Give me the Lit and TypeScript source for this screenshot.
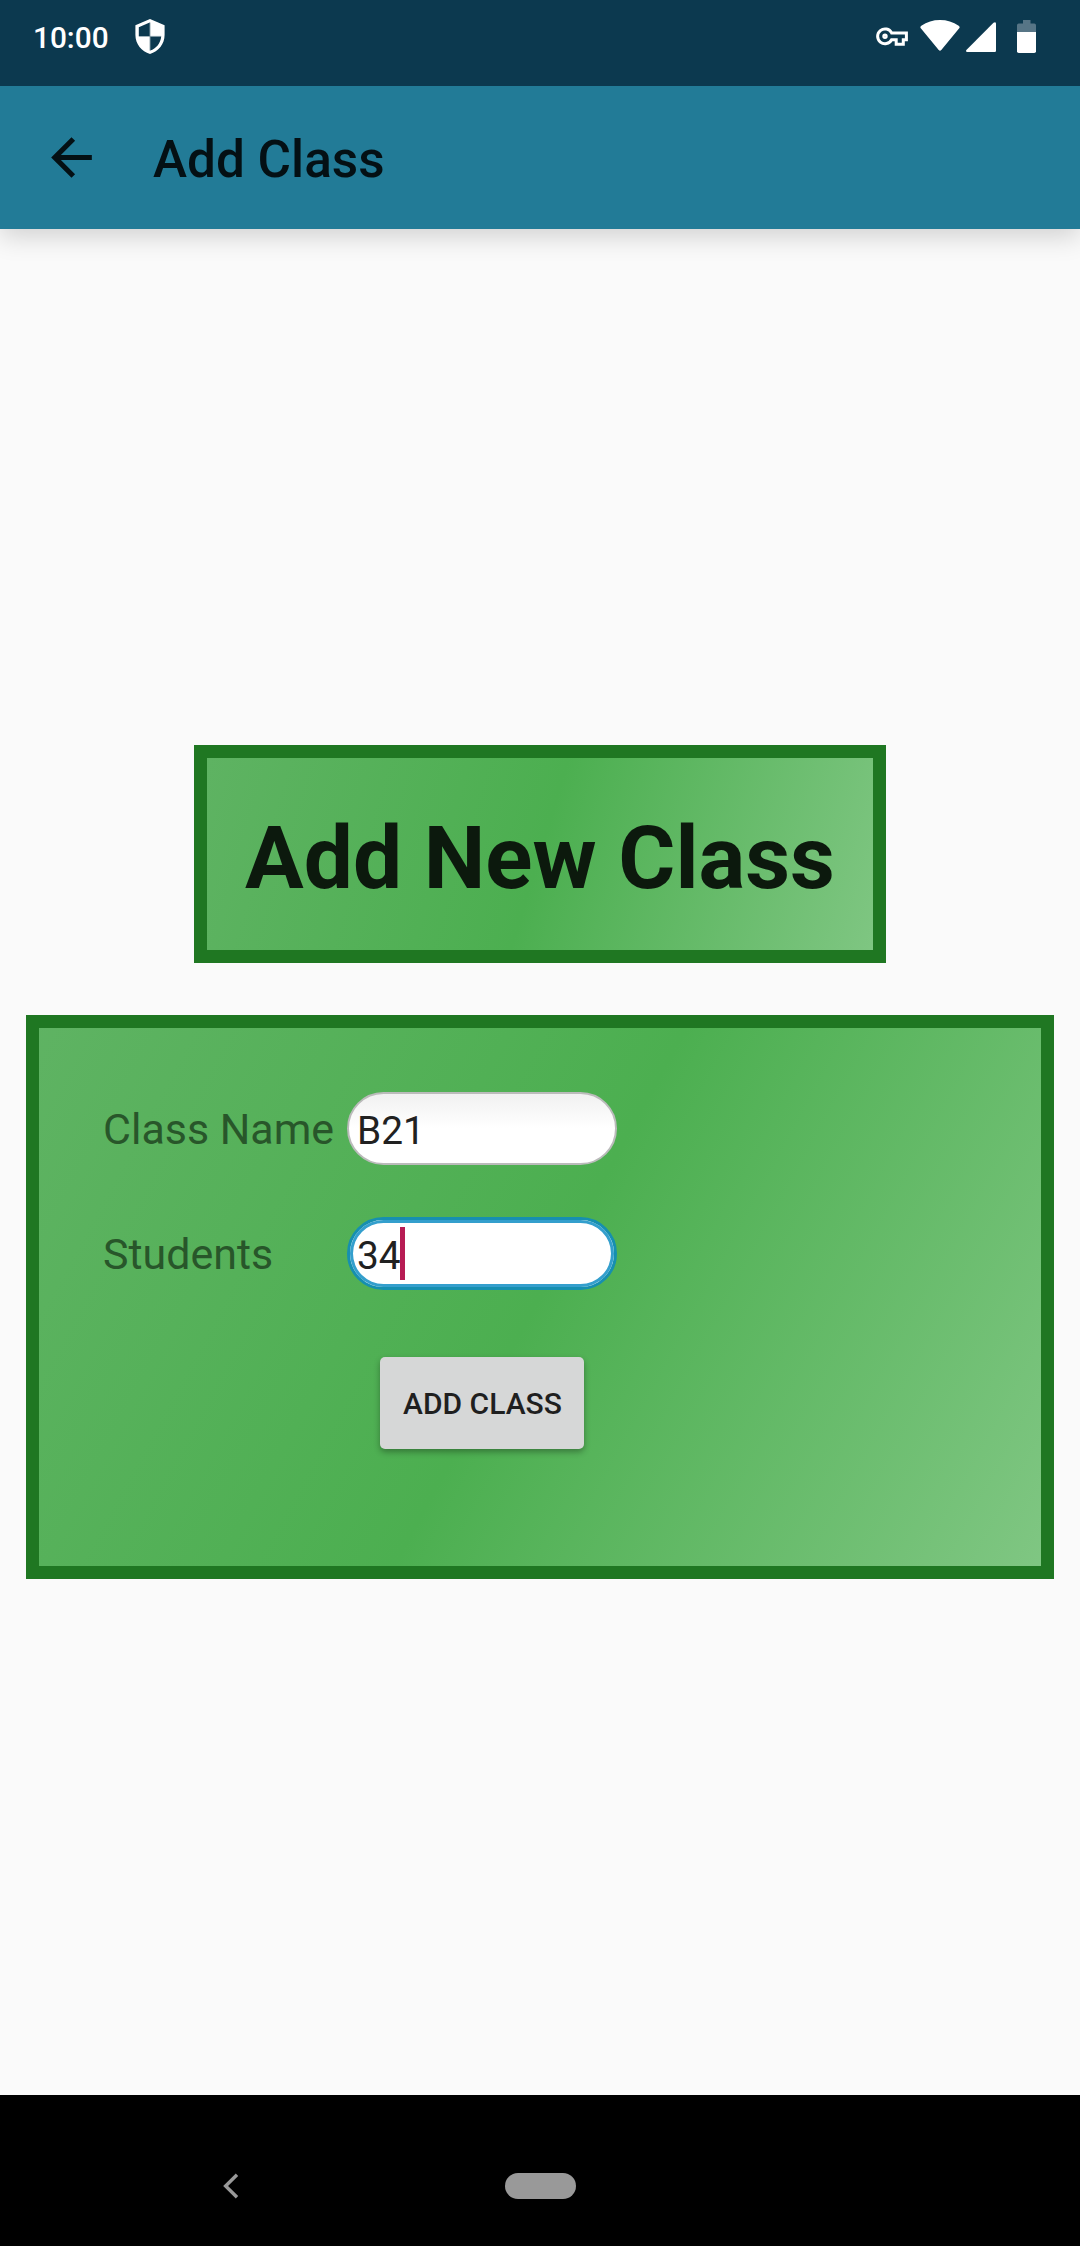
import { LitElement, html, css } from "lit";
import { customElement, property } from "lit/decorators.js";

@customElement("status-bar")
class StatusBar extends LitElement {
  static styles = css`
    :host {
      display: flex;
      height: 86px;
      box-sizing: border-box;
      padding: 19px 44px 0 33px;
      background: #0c394f;
      color: #fff;
      align-items: flex-start;
    }
    svg { display: block; flex: none; }
    .time {
      width: 102px;
      padding-top: 1px;
      font: 500 29.8px/36px Roboto, sans-serif;
      white-space: nowrap;
    }
    .spacer { flex: 1; }
    .key { margin: 8px 12px 0 0; }
    .wifi { margin: 1px 6px 0 0; }
    .signal { margin: 3px 21px 0 0; }
    .battery { margin-top: 1px; }
  `;
  render() {
    return html`
      <span class="time">10:00</span>
      <svg width="30" height="35" viewBox="0 0 30 35">
        <path fill="#fff" fill-rule="evenodd"
          d="M15 0L.4 6.2V16C.4 25 6.6 32.6 15 35c8.400-2.400 14.600-10 14.600-19V6.200zM14.700 3.500V17H3.800V8.200zM15.300 17.700H26.200C25.600 24 21 29.800 15.300 31.600z" />
        <path stroke="#0c394f" stroke-width=".7" opacity=".6" d="M15 3.500V31.600M3.800 17.400H26.200" />
      </svg>
      <span class="spacer"></span>
      <svg class="key" width="32" height="19" viewBox="0 0 32 19">
        <g fill="none" stroke="#fff" stroke-width="3">
          <path d="M15.600 5.900H30.400V12.700H27.300V17.200H20.200V12.700H15.600A7.400 7.400 0 1 1 15.600 5.900z" />
          <circle cx="9" cy="9.300" r="1.200" />
        </g>
      </svg>
      <svg class="wifi" width="40" height="31" viewBox="0 0 40 31">
        <path fill="#fff" d="M1 8.600Q-.4 7 1.300 5.800Q9.600 0 20 0T38.700 5.800Q40.400 7 39 8.600L21.300 30Q20 31.600 18.700 30z" />
      </svg>
      <svg class="signal" width="30" height="30" viewBox="0 0 30 30">
        <path fill="#fff" d="M30 1.300V28.800Q30 30 28.800 30H1.200Q-.6 29.600.4 28L27.500.8Q29.500-.7 30 1.300z" />
      </svg>
      <svg class="battery" width="19" height="33" viewBox="0 0 19 33">
        <path fill="#577586" d="M6 0H13.500V3.400H17.200Q19 3.400 19 5.200V12H0V5.200Q0 3.400 1.800 3.400H6z" />
        <path fill="#fff" d="M0 12H19V31.200Q19 33 17.200 33H1.800Q0 33 0 31.200z" />
      </svg>
    `;
  }
}

@customElement("app-bar")
class AppBar extends LitElement {
  @property() heading = "";
  static styles = css`
    :host {
      display: flex;
      align-items: center;
      height: 143px;
      box-sizing: border-box;
      padding-left: 41px;
      gap: 51px;
      background: #227b97;
      color: #041014;
      box-shadow: 0 8px 24px rgba(0, 0, 0, 0.16);
      clip-path: inset(0 0 -60px 0);
      z-index: 1;
    }
    svg { display: block; }
    .title { font: 500 51.3px/61px Roboto, sans-serif; padding-top: 4px; }
  `;
  render() {
    return html`
      <svg width="61" height="61" viewBox="0 0 24 24">
        <path fill="currentColor" d="M20 11H7.830l5.590-5.590L12 4l-8 8 8 8 1.410-1.410L7.830 13H20v-2z" />
      </svg>
      <span class="title">${this.heading}</span>
    `;
  }
}

@customElement("text-field")
class TextField extends LitElement {
  @property() label = "";
  @property() value = "";
  @property({ type: Boolean, reflect: true }) active = false;
  static styles = css`
    :host { display: flex; align-items: center; height: 73px; }
    .label {
      width: 244px;
      font: 400 42.950px/50px Roboto, sans-serif;
      color: #28562a;
      white-space: nowrap;
    }
    .box {
      display: flex;
      align-items: center;
      width: 270px;
      height: 73px;
      box-sizing: border-box;
      border: 2px solid #bbb;
      border-radius: 36.5px;
      padding-left: 8px;
      background: linear-gradient(#f1f1f1, #fff 50%);
      font: 400 38.800px/46px Roboto, sans-serif;
      color: #212121;
    }
    :host([active]) .box {
      border: 3px solid #168fb0;
      box-shadow: inset 0 0 0 3px #349fcd;
      padding-left: 7px;
      background: #fff;
    }
    .text { padding-top: 4px; }
    .caret { width: 5px; height: 53px; margin-left: -1px; background: #b71c54; }
  `;
  render() {
    return html`
      <span class="label">${this.label}</span>
      <div class="box">
        <span class="text">${this.value}</span>
        ${this.active ? html`<span class="caret"></span>` : null}
      </div>
    `;
  }
}

@customElement("app-root")
class AppRoot extends LitElement {
  static styles = css`
    :host {
      display: flex;
      flex-direction: column;
      height: 2246px;
      background: #fafafa;
      font-family: Roboto, sans-serif;
    }
    .content {
      flex: 1;
      display: flex;
      flex-direction: column;
      align-items: center;
      justify-content: center;
      gap: 52px;
    }
    .card {
      box-sizing: border-box;
      border: 13px solid #1f7722;
      background: linear-gradient(var(--angle), #5fb363, #4caf50 50%, #81c784) border-box;
    }
    .banner {
      --angle: 106.8deg;
      display: flex;
      align-items: center;
      justify-content: center;
      width: 692px;
      height: 218px;
      font: 700 87.300px/103px Roboto, sans-serif;
      color: #0c190d;
      white-space: nowrap;
      padding-top: 9px;
    }
    .form {
      --angle: 118.5deg;
      display: flex;
      flex-direction: column;
      width: 1028px;
      height: 564px;
      padding: 64px;
      gap: 52px;
    }
    .submit {
      width: 204px;
      height: 92px;
      margin: 15px 0 0 277px;
      padding: 2px 0 0 1px;
      border: 0;
      border-radius: 5px;
      background: #d6d7d7;
      box-shadow: 0 3px 6px rgba(0, 0, 0, 0.32);
      font: 500 30px/36px Roboto, sans-serif;
      color: #1f1f1f;
      white-space: nowrap;
    }
    .nav {
      display: flex;
      align-items: center;
      height: 151px;
      box-sizing: border-box;
      padding: 30px 0 0 223px;
      gap: 266px;
      background: #000;
    }
    .nav svg { display: block; }
    .pill { width: 71px; height: 26px; border-radius: 13px; background: #999; }
  `;
  render() {
    return html`
      <status-bar></status-bar>
      <app-bar heading="Add Class"></app-bar>
      <main class="content">
        <div class="card banner">Add New Class</div>
        <section class="card form">
          <text-field label="Class Name" value="B21"></text-field>
          <text-field label="Students" value="34" active></text-field>
          <button class="submit">ADD CLASS</button>
        </section>
      </main>
      <nav class="nav">
        <svg width="16" height="26" viewBox="0 0 16 26">
          <path fill="none" stroke="#999" stroke-width="3.400" d="M14 1.700L2.600 13L14 24.300" />
        </svg>
        <span class="pill"></span>
      </nav>
    `;
  }
}
